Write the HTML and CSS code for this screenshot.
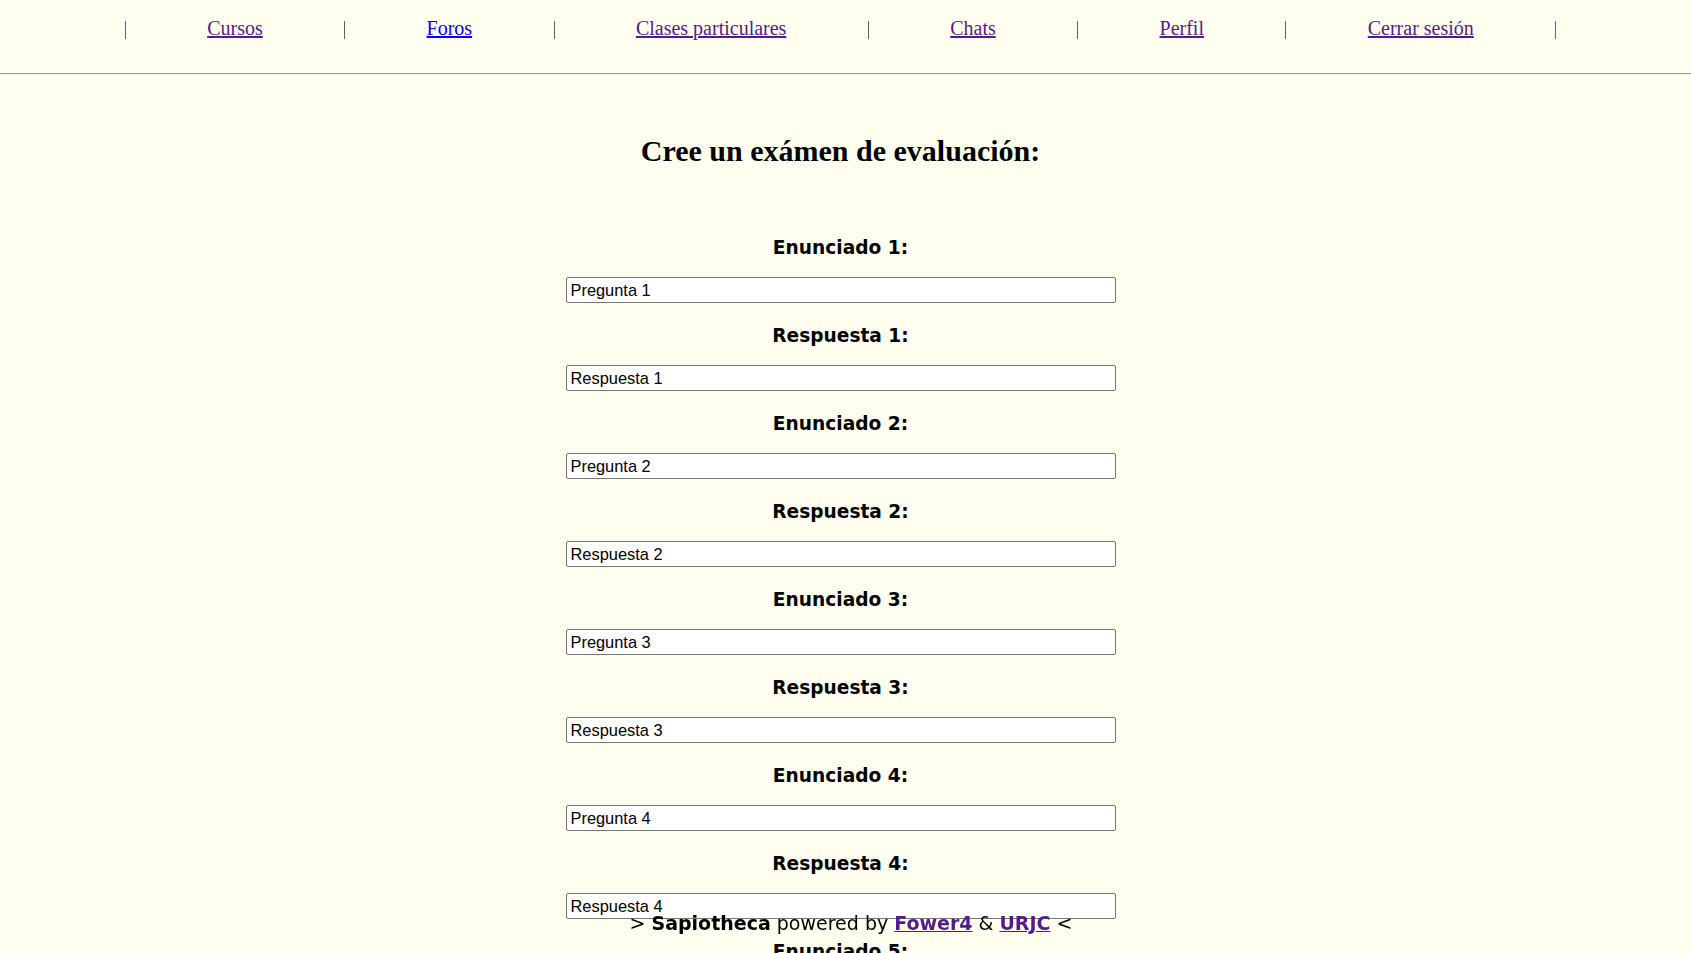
FILE: index.html
```html
<!DOCTYPE html>
<html lang="es">
<head>
<meta charset="utf-8">
<title>Sapiotheca - Crear examen</title>
<link rel="stylesheet" href="styles.css">
</head>
<body>
<header class="topbar">
  <nav class="menu">
    <span class="sep sep-edge"></span>
    <a class="menu-link visited" href="#">Cursos</a>
    <span class="sep"></span>
    <a class="menu-link" href="#">Foros</a>
    <span class="sep"></span>
    <a class="menu-link visited" href="#">Clases particulares</a>
    <span class="sep"></span>
    <a class="menu-link visited" href="#">Chats</a>
    <span class="sep"></span>
    <a class="menu-link visited" href="#">Perfil</a>
    <span class="sep"></span>
    <a class="menu-link visited" href="#">Cerrar sesión</a>
    <span class="sep sep-edge"></span>
  </nav>
</header>
<main class="page">
  <h1 class="title">Cree un exámen de evaluación:</h1>
  <form class="exam">
    <div class="field"><label class="field-label">Enunciado 1:</label><input class="field-input" type="text" value="Pregunta 1"></div>
    <div class="field"><label class="field-label">Respuesta 1:</label><input class="field-input" type="text" value="Respuesta 1"></div>
    <div class="field"><label class="field-label">Enunciado 2:</label><input class="field-input" type="text" value="Pregunta 2"></div>
    <div class="field"><label class="field-label">Respuesta 2:</label><input class="field-input" type="text" value="Respuesta 2"></div>
    <div class="field"><label class="field-label">Enunciado 3:</label><input class="field-input" type="text" value="Pregunta 3"></div>
    <div class="field"><label class="field-label">Respuesta 3:</label><input class="field-input" type="text" value="Respuesta 3"></div>
    <div class="field"><label class="field-label">Enunciado 4:</label><input class="field-input" type="text" value="Pregunta 4"></div>
    <div class="field"><label class="field-label">Respuesta 4:</label><input class="field-input" type="text" value="Respuesta 4"></div>
    <div class="field"><label class="field-label">Enunciado 5:</label><input class="field-input" type="text" value="Pregunta 5"></div>
    <div class="field"><label class="field-label">Respuesta 5:</label><input class="field-input" type="text" value="Respuesta 5"></div>
  </form>
</main>
<footer class="credits">&gt; <b>Sapiotheca</b> powered by <a class="credit-link" href="#">Fower4</a> &amp; <a class="credit-link" href="#">URJC</a> &lt;</footer>
</body>
</html>
```

FILE: styles.css
```css
html, body {
  margin: 0;
  padding: 0;
}
body {
  background: #fffff0;
  font-family: "Liberation Serif", "Times New Roman", serif;
  color: #000;
}
.topbar {
  padding: 17px 10px 33px 0;
  border-bottom: 1px solid #9a9a9a;
  box-shadow: 0 1px 0 #eeeeee;
}
.menu {
  display: flex;
  justify-content: center;
  align-items: flex-start;
  font-size: 20px;
  line-height: 23px;
}
.sep {
  display: block;
  width: 1px;
  height: 18px;
  margin-top: 4px;
  background: #5d5d70;
}
.sep-edge {
  background: #8a4aa6;
}
.menu-link {
  margin: 0 81.4px;
  color: #0000ee;
  text-decoration: underline;
}
.menu-link.visited {
  color: #551a8b;
}
.page {
  padding: 58px 10px 120px 0;
  display: flex;
  flex-direction: column;
  align-items: center;
}
.title {
  margin: 0;
  font-size: 30px;
  line-height: 37px;
  font-weight: bold;
}
.exam {
  margin-top: 67px;
  display: flex;
  flex-direction: column;
  align-items: center;
  gap: 21px;
}
.field {
  display: flex;
  flex-direction: column;
  align-items: center;
}
.field-label {
  font-family: "DejaVu Sans", Verdana, sans-serif;
  font-weight: bold;
  font-size: 18.6px;
  line-height: 22px;
  margin-top: 1px;
  margin-bottom: 18px;
}
.field-input {
  box-sizing: border-box;
  width: 550px;
  height: 26px;
  margin: 0;
  padding: 1px 3px 1px 4px;
  border: 1px solid #767676;
  border-radius: 2px;
  background: #fff;
  font-family: "Liberation Sans", Arial, sans-serif;
  font-size: 16.4px;
  color: #000;
}
.credits {
  position: fixed;
  left: 0;
  right: 0;
  bottom: 19px;
  padding-left: 11px;
  text-align: center;
  font-family: "DejaVu Sans", Verdana, sans-serif;
  font-size: 19px;
  line-height: 22px;
  color: #000;
}
.credit-link {
  color: #551a8b;
  font-weight: bold;
  text-decoration: underline;
}
```
